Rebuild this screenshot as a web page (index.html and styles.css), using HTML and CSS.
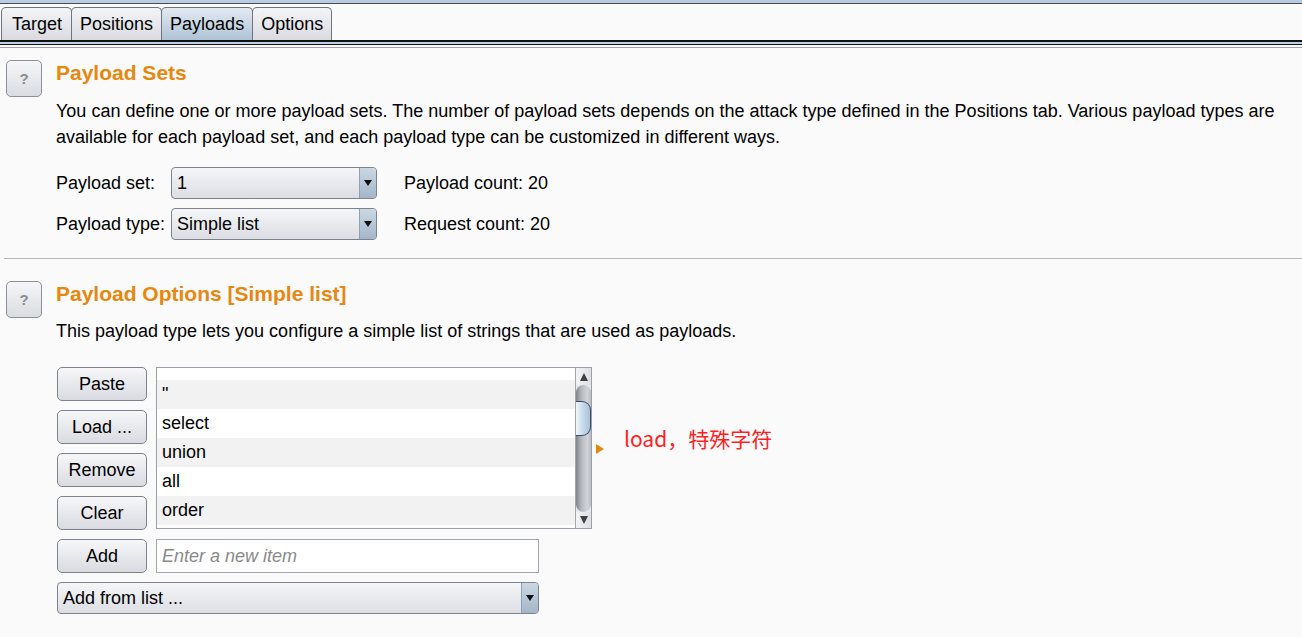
FILE: index.html
```html
<!DOCTYPE html>
<html lang="en">
<head>
<meta charset="utf-8">
<title>Payloads</title>
<link rel="stylesheet" href="styles.css">
</head>
<body>
<div class="topstrip"></div>
<nav class="tabbar">
  <div class="tab tab-first">Target</div>
  <div class="tab">Positions</div>
  <div class="tab active">Payloads</div>
  <div class="tab">Options</div>
</nav>
<div class="tabrule"></div>
<div class="grayrule"></div>
<main class="panel">
  <section class="sec sec-first">
    <div class="help">?</div>
    <div class="sec-body">
      <h2 class="sec-title">Payload Sets</h2>
      <p class="sec-desc">You can define one or more payload sets. The number of payload sets depends on the attack type defined in the Positions tab. Various payload types are available for each payload set, and each payload type can be customized in different ways.</p>
      <div class="set-grid">
        <span class="lbl">Payload set:</span>
        <div class="combo"><span class="combo-val">1</span><span class="combo-arrow"><i class="tri-down"></i></span></div>
        <span class="count">Payload count: 20</span>
        <span class="lbl">Payload type:</span>
        <div class="combo"><span class="combo-val">Simple list</span><span class="combo-arrow"><i class="tri-down"></i></span></div>
        <span class="count">Request count: 20</span>
      </div>
    </div>
  </section>
  <div class="sep"></div>
  <section class="sec sec-second">
    <div class="help">?</div>
    <div class="sec-body">
      <h2 class="sec-title">Payload Options [Simple list]</h2>
      <p class="sec-desc sec-desc-2">This payload type lets you configure a simple list of strings that are used as payloads.</p>
      <div class="opt-grid">
        <button class="btn b1">Paste</button>
        <button class="btn b2">Load ...</button>
        <button class="btn b3">Remove</button>
        <button class="btn b4">Clear</button>
        <div class="list">
          <div class="list-view">
            <div class="list-rows">
              <div class="row row-part-top"></div>
              <div class="row">"</div>
              <div class="row">select</div>
              <div class="row">union</div>
              <div class="row">all</div>
              <div class="row">order</div>
              <div class="row row-part-bottom"></div>
            </div>
          </div>
          <div class="vscroll">
            <div class="sb-btn"><i class="tri-up-s"></i></div>
            <div class="sb-track"><div class="sb-thumb"></div></div>
            <div class="sb-btn sb-btn-down"><i class="tri-down-s"></i></div>
          </div>
        </div>
        <div class="note">
          <i class="tri-right"></i>
          <span class="note-text">load，特殊字符</span>
        </div>
        <button class="btn b5">Add</button>
        <div class="input">Enter a new item</div>
        <div class="combo combo-wide"><span class="combo-val">Add from list ...</span><span class="combo-arrow"><i class="tri-down"></i></span></div>
      </div>
    </div>
  </section>
</main>
</body>
</html>
```
FILE: styles.css
```css
* { box-sizing: border-box; }
html, body { margin: 0; padding: 0; }
body {
  background: #fafafa;
  font-family: "Liberation Sans", Arial, sans-serif;
  font-size: 18px;
  color: #000;
  width: 1302px;
  height: 637px;
  overflow: hidden;
}

.topstrip {
  height: 4px;
  background: #b9cde0;
  border-bottom: 1px solid #4a4e56;
}

.tabbar {
  display: flex;
  align-items: flex-end;
  height: 36px;
  padding-left: 1px;
  padding-top: 3px;
}
.tab {
  height: 33px;
  line-height: 33px;
  padding: 0 8px;
  border: 1px solid #6f737c;
  border-bottom: none;
  border-radius: 5px 5px 0 0;
  background: linear-gradient(#f3f4f6, #d9dbe1);
  margin-left: -1px;
}
.tab-first { margin-left: 0; padding: 0 9px 0 10px; }
.tab.active {
  background: linear-gradient(#e4eaf1, #aec3d6);
}

.tabrule {
  height: 5px;
  border-top: 2px solid #111;
  border-bottom: 1px solid #111;
  background: #bcd0e2;
}
.grayrule {
  height: 1px;
  margin-top: 2px;
  background: #9ca0a8;
}

.sec {
  display: flex;
  align-items: flex-start;
}
.sec-first { padding-top: 12px; }
.sec-second { padding-top: 22px; }

.help {
  width: 36px;
  height: 37px;
  margin-left: 6px;
  flex: none;
  border: 1px solid #8a8f99;
  border-radius: 5px;
  background: linear-gradient(#f6f6f8, #dadce2);
  color: #8c8c8c;
  font-weight: bold;
  font-size: 15px;
  display: flex;
  align-items: center;
  justify-content: center;
}

.sec-body {
  margin-left: 14px;
  flex: 1;
  padding-right: 12px;
}
.sec-title {
  margin: 0;
  font-size: 21px;
  line-height: 26px;
  font-weight: bold;
  color: #e8870e;
}
.sec-desc {
  margin: 12px 0 0;
  line-height: 26px;
}
.sec-desc-2 { margin-top: 11px; }

.set-grid {
  margin-top: 17px;
  display: grid;
  grid-template-columns: 115px 206px auto;
  grid-auto-rows: 32px;
  row-gap: 9px;
  align-items: center;
}
.count { padding-left: 27px; }

.combo {
  height: 32px;
  display: flex;
  border: 1px solid #7d828c;
  border-radius: 4px;
  background: linear-gradient(#f5f6f8, #dcdee4);
  overflow: hidden;
}
.combo-val {
  flex: 1;
  padding-left: 5px;
  line-height: 30px;
  white-space: nowrap;
}
.combo-arrow {
  width: 17px;
  flex: none;
  border-left: 1px solid #8ea2b6;
  background: linear-gradient(#cbd7e3, #a3b6c9);
  display: flex;
  align-items: center;
  justify-content: center;
}
.tri-down {
  width: 0; height: 0;
  border-left: 4px solid transparent;
  border-right: 4px solid transparent;
  border-top: 6px solid #111;
}

.sep {
  height: 1px;
  margin: 18px 0 0 4px;
  background: #b4b6ba;
}

.opt-grid {
  margin-top: 23px;
  margin-left: 1px;
  display: grid;
  grid-template-columns: 90px 436px auto;
  grid-template-rows: 34px 34px 34px 34px 34px 32px;
  column-gap: 9px;
  row-gap: 9px;
}

.btn {
  font: inherit;
  color: #000;
  height: 34px;
  border: 1px solid #7d828c;
  border-radius: 5px;
  background: linear-gradient(#f7f7f9, #d9dbe1);
  padding: 0;
  margin: 0;
}
.b1 { grid-row: 1; grid-column: 1; }
.b2 { grid-row: 2; grid-column: 1; }
.b3 { grid-row: 3; grid-column: 1; }
.b4 { grid-row: 4; grid-column: 1; }
.b5 { grid-row: 5; grid-column: 1; }

.list {
  grid-row: 1 / 5;
  grid-column: 2;
  height: 162px;
  display: flex;
  border: 1px solid #9a9ea8;
  background: #fff;
}
.list-view {
  flex: 1;
  overflow: hidden;
}
.row {
  height: 29px;
  line-height: 29px;
  padding-left: 5px;
  background: #fff;
}
.row:nth-child(even) { background: #f2f2f2; }
.row-part-top { height: 12px; }
.row-part-bottom { height: 3px; }

.vscroll {
  width: 16px;
  flex: none;
  border-left: 1px solid #a3a6ad;
  background: #e9eaed;
  display: flex;
  flex-direction: column;
}
.sb-btn {
  height: 17px;
  flex: none;
  display: flex;
  align-items: center;
  justify-content: center;
  background: linear-gradient(to right, #f3f4f6, #dcdee2);
}
.sb-btn-down { height: 16px; }
.tri-up-s {
  width: 0; height: 0;
  border-left: 4px solid transparent;
  border-right: 4px solid transparent;
  border-bottom: 8px solid #3c3f45;
}
.tri-down-s {
  width: 0; height: 0;
  border-left: 4px solid transparent;
  border-right: 4px solid transparent;
  border-top: 8px solid #3c3f45;
}
.sb-track {
  flex: 1;
  border-radius: 8px;
  background: linear-gradient(to right, #7f838a, #b4b7bd 35%, #d2d4d9 75%, #b9bcc2);
  padding-top: 16px;
}
.sb-thumb {
  height: 35px;
  width: 15px;
  border: 1px solid #3b4b5c;
  border-left: none;
  border-radius: 0 9px 9px 0;
  background: linear-gradient(to right, #f2f7fb, #c9dcec 45%, #a9c3da);
}

.note {
  grid-row: 1 / 5;
  grid-column: 3;
  align-self: center;
  margin-left: -5px;
  display: flex;
  align-items: center;
}
.tri-right {
  width: 0; height: 0;
  border-top: 5px solid transparent;
  border-bottom: 5px solid transparent;
  border-left: 8px solid #e8870e;
}
.note-text {
  margin-left: 20px;
  margin-bottom: 22px;
  font-family: "Noto Sans CJK SC", "Noto Sans", sans-serif;
  font-size: 21px;
  line-height: 28px;
  color: #ff1f1f;
}

.input {
  grid-row: 5;
  grid-column: 2;
  width: 383px;
  height: 34px;
  border: 1px solid #a3a6ad;
  background: #fff;
  padding-left: 5px;
  line-height: 32px;
  font-style: italic;
  color: #8a8a8a;
  white-space: nowrap;
}

.combo-wide {
  grid-row: 6;
  grid-column: 1 / 3;
  width: 482px;
  height: 32px;
}
```
